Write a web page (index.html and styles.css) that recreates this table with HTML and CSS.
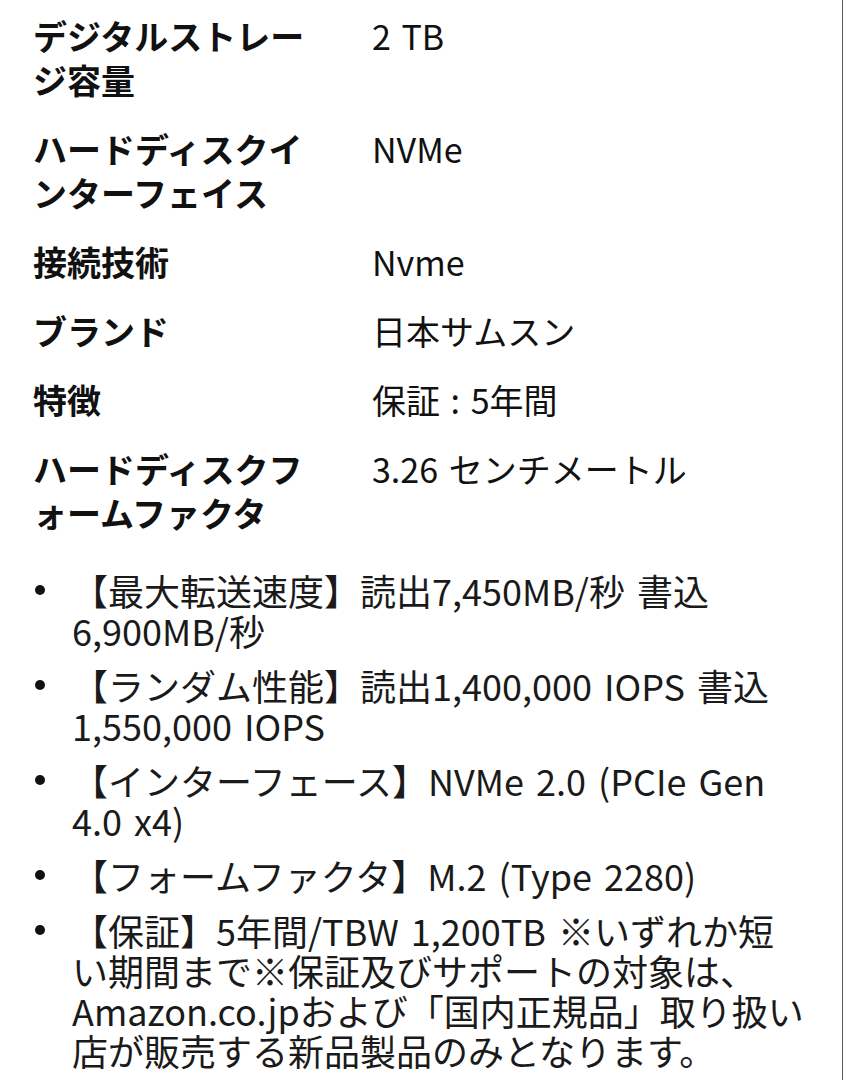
FILE: index.html
```html
<!DOCTYPE html>
<html lang="ja">
<head>
<meta charset="utf-8">
<title>製品仕様</title>
<link rel="stylesheet" href="styles.css">
</head>
<body>
<div class="page">
  <dl class="specs">
    <dt class="label">デジタルストレージ容量</dt>
    <dd class="value">2 TB</dd>
    <dt class="label">ハードディスクインターフェイス</dt>
    <dd class="value">NVMe</dd>
    <dt class="label">接続技術</dt>
    <dd class="value">Nvme</dd>
    <dt class="label">ブランド</dt>
    <dd class="value">日本サムスン</dd>
    <dt class="label">特徴</dt>
    <dd class="value">保証 : 5年間</dd>
    <dt class="label">ハードディスクフォームファクタ</dt>
    <dd class="value">3.26 センチメートル</dd>
  </dl>
  <ul class="features">
    <li class="feature"><span class="feature-text">【最大転送速度】読出7,450MB/秒 書込 6,900MB/秒</span></li>
    <li class="feature"><span class="feature-text">【ランダム性能】読出1,400,000 IOPS 書込 1,550,000 IOPS</span></li>
    <li class="feature"><span class="feature-text">【インターフェース】NVMe 2.0 (PCIe Gen 4.0 x4)</span></li>
    <li class="feature"><span class="feature-text">【フォームファクタ】M.2 (Type 2280)</span></li>
    <li class="feature"><span class="feature-text">【保証】5年間/TBW 1,200TB ※いずれか短い期間まで※保証及びサポートの対象は、Amazon.co.jpおよび「国内正規品」取り扱い店が販売する新品製品のみとなります。</span></li>
  </ul>
</div>
</body>
</html>
```

FILE: styles.css
```css
html, body {
  margin: 0;
  padding: 0;
  background: #ffffff;
}

body {
  font-family: "Noto Sans CJK JP", "Noto Sans", sans-serif;
  color: #111111;
}

.page {
  min-height: 1080px;
  box-sizing: border-box;
  border-right: 1px solid #5a5a5a;
  padding-top: 14px;
}

.specs {
  margin: 0;
  padding: 0 0 0 33px;
  display: grid;
  grid-template-columns: 339px 1fr;
  row-gap: 25px;
  font-size: 34px;
  line-height: 44px;
  line-break: normal;
}

.label {
  margin: 0;
  padding-right: 52px;
  font-weight: 700;
}

.value {
  margin: 0;
  font-weight: 400;
  word-spacing: 3px;
}

.features {
  list-style: none;
  margin: 35px 0 0 0;
  padding: 0 37px 0 0;
  display: flex;
  flex-direction: column;
  gap: 15px;
  font-size: 36px;
  line-height: 40px;
  word-spacing: 4px;
  color: #1a1a1a;
}

.feature {
  display: flex;
  align-items: flex-start;
}

.feature::before {
  content: "";
  flex: 0 0 10px;
  height: 10px;
  margin: 15px 27px 0 35px;
  border-radius: 50%;
  background: #111111;
}

.feature-text {
  flex: 1 1 auto;
  min-width: 0;
}
```
